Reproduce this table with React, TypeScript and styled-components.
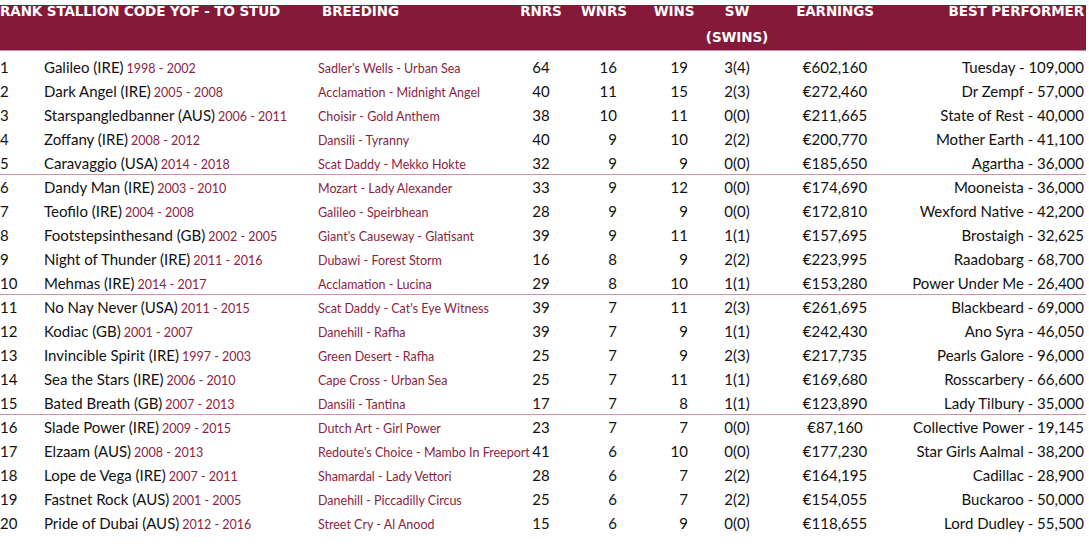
import styled, { createGlobalStyle } from "styled-components";

const GlobalStyle = createGlobalStyle`
  html, body {
    margin: 0;
    padding: 0;
    background: #ffffff;
  }
  body {
    font-family: Lato, "Open Sans", sans-serif;
    color: #111111;
  }
`;

const COLS = "44px 274px 200px 46px 86px 50px 74px 122px 188px";

type Row = [string, string, string, string, number, number, number, string, string, string];

const rows: Row[] = [
  ["1", "Galileo (IRE)", "1998 - 2002", "Sadler's Wells - Urban Sea", 64, 16, 19, "3(4)", "€602,160", "Tuesday - 109,000"],
  ["2", "Dark Angel (IRE)", "2005 - 2008", "Acclamation - Midnight Angel", 40, 11, 15, "2(3)", "€272,460", "Dr Zempf - 57,000"],
  ["3", "Starspangledbanner (AUS)", "2006 - 2011", "Choisir - Gold Anthem", 38, 10, 11, "0(0)", "€211,665", "State of Rest - 40,000"],
  ["4", "Zoffany (IRE)", "2008 - 2012", "Dansili - Tyranny", 40, 9, 10, "2(2)", "€200,770", "Mother Earth - 41,100"],
  ["5", "Caravaggio (USA)", "2014 - 2018", "Scat Daddy - Mekko Hokte", 32, 9, 9, "0(0)", "€185,650", "Agartha - 36,000"],
  ["6", "Dandy Man (IRE)", "2003 - 2010", "Mozart - Lady Alexander", 33, 9, 12, "0(0)", "€174,690", "Mooneista - 36,000"],
  ["7", "Teofilo (IRE)", "2004 - 2008", "Galileo - Speirbhean", 28, 9, 9, "0(0)", "€172,810", "Wexford Native - 42,200"],
  ["8", "Footstepsinthesand (GB)", "2002 - 2005", "Giant's Causeway - Glatisant", 39, 9, 11, "1(1)", "€157,695", "Brostaigh - 32,625"],
  ["9", "Night of Thunder (IRE)", "2011 - 2016", "Dubawi - Forest Storm", 16, 8, 9, "2(2)", "€223,995", "Raadobarg - 68,700"],
  ["10", "Mehmas (IRE)", "2014 - 2017", "Acclamation - Lucina", 29, 8, 10, "1(1)", "€153,280", "Power Under Me - 26,400"],
  ["11", "No Nay Never (USA)", "2011 - 2015", "Scat Daddy - Cat's Eye Witness", 39, 7, 11, "2(3)", "€261,695", "Blackbeard - 69,000"],
  ["12", "Kodiac (GB)", "2001 - 2007", "Danehill - Rafha", 39, 7, 9, "1(1)", "€242,430", "Ano Syra - 46,050"],
  ["13", "Invincible Spirit (IRE)", "1997 - 2003", "Green Desert - Rafha", 25, 7, 9, "2(3)", "€217,735", "Pearls Galore - 96,000"],
  ["14", "Sea the Stars (IRE)", "2006 - 2010", "Cape Cross - Urban Sea", 25, 7, 11, "1(1)", "€169,680", "Rosscarbery - 66,600"],
  ["15", "Bated Breath (GB)", "2007 - 2013", "Dansili - Tantina", 17, 7, 8, "1(1)", "€123,890", "Lady Tilbury - 35,000"],
  ["16", "Slade Power (IRE)", "2009 - 2015", "Dutch Art - Girl Power", 23, 7, 7, "0(0)", "€87,160", "Collective Power - 19,145"],
  ["17", "Elzaam (AUS)", "2008 - 2013", "Redoute's Choice - Mambo In Freeport", 41, 6, 10, "0(0)", "€177,230", "Star Girls Aalmal - 38,200"],
  ["18", "Lope de Vega (IRE)", "2007 - 2011", "Shamardal - Lady Vettori", 28, 6, 7, "2(2)", "€164,195", "Cadillac - 28,900"],
  ["19", "Fastnet Rock (AUS)", "2001 - 2005", "Danehill - Piccadilly Circus", 25, 6, 7, "2(2)", "€154,055", "Buckaroo - 50,000"],
  ["20", "Pride of Dubai (AUS)", "2012 - 2016", "Street Cry - Al Anood", 15, 6, 9, "0(0)", "€118,655", "Lord Dudley - 55,500"],
];

const Page = styled.div`
  width: 1086px;
  padding-top: 5px;
`;

const Header = styled.div`
  display: grid;
  grid-template-columns: ${COLS};
  height: 45px;
  background: #84193a;
  border-bottom: 1px solid #c98d9e;
  color: #ffffff;
  font-family: "DejaVu Sans", sans-serif;
  font-weight: bold;
  font-size: 13.5px;
  letter-spacing: -0.1px;
  line-height: 13px;
  text-transform: uppercase;
`;

const HeadCell = styled.div<{ $align?: string; $pad?: number }>`
  text-align: ${(p) => p.$align || "center"};
  padding-right: ${(p) => p.$pad || 0}px;
  white-space: nowrap;
`;

const SubHead = styled.span`
  display: block;
  margin-top: 13px;
`;

const Body = styled.div`
  padding-top: 4px;
`;

const TableRow = styled.div<{ $rule: boolean }>`
  display: grid;
  grid-template-columns: ${COLS};
  height: 24px;
  align-items: center;
  box-sizing: border-box;
  border-bottom: 1px solid ${(p) => (p.$rule ? "#cc93a3" : "transparent")};
  font-size: 15px;
  white-space: nowrap;
`;

const Cell = styled.div<{ $align?: string; $pad?: number }>`
  text-align: ${(p) => p.$align || "left"};
  padding-right: ${(p) => p.$pad || 0}px;
`;

const Years = styled.span`
  color: #8b1e41;
  font-size: 12.5px;
  margin-left: 3px;
`;

const Breeding = styled(Cell)`
  color: #8b1e41;
  font-size: 12.5px;
  padding-top: 3px;
`;

export default function App() {
  return (
    <Page>
      <GlobalStyle />
      <Header>
        <HeadCell $align="left" style={{ gridColumn: "1 / 3" }}>
          Rank Stallion Code YOF - To Stud
        </HeadCell>
        <HeadCell $align="left" style={{ paddingLeft: 4 }}>Breeding</HeadCell>
        <HeadCell>Rnrs</HeadCell>
        <HeadCell $pad={6}>Wnrs</HeadCell>
        <HeadCell $pad={2}>Wins</HeadCell>
        <HeadCell>
          SW
          <SubHead>(Swins)</SubHead>
        </HeadCell>
        <HeadCell>Earnings</HeadCell>
        <HeadCell $align="right">Best Performer</HeadCell>
      </Header>
      <Body>
        {rows.map((r, i) => (
          <TableRow key={r[0]} $rule={i === 4 || i === 9 || i === 14}>
            <Cell>{r[0]}</Cell>
            <Cell>
              {r[1]}
              <Years>{r[2]}</Years>
            </Cell>
            <Breeding>{r[3]}</Breeding>
            <Cell $align="center">{r[4]}</Cell>
            <Cell $align="right" $pad={33}>{r[5]}</Cell>
            <Cell $align="right" $pad={12}>{r[6]}</Cell>
            <Cell $align="center">{r[7]}</Cell>
            <Cell $align="center">{r[8]}</Cell>
            <Cell $align="right">{r[9]}</Cell>
          </TableRow>
        ))}
      </Body>
    </Page>
  );
}
